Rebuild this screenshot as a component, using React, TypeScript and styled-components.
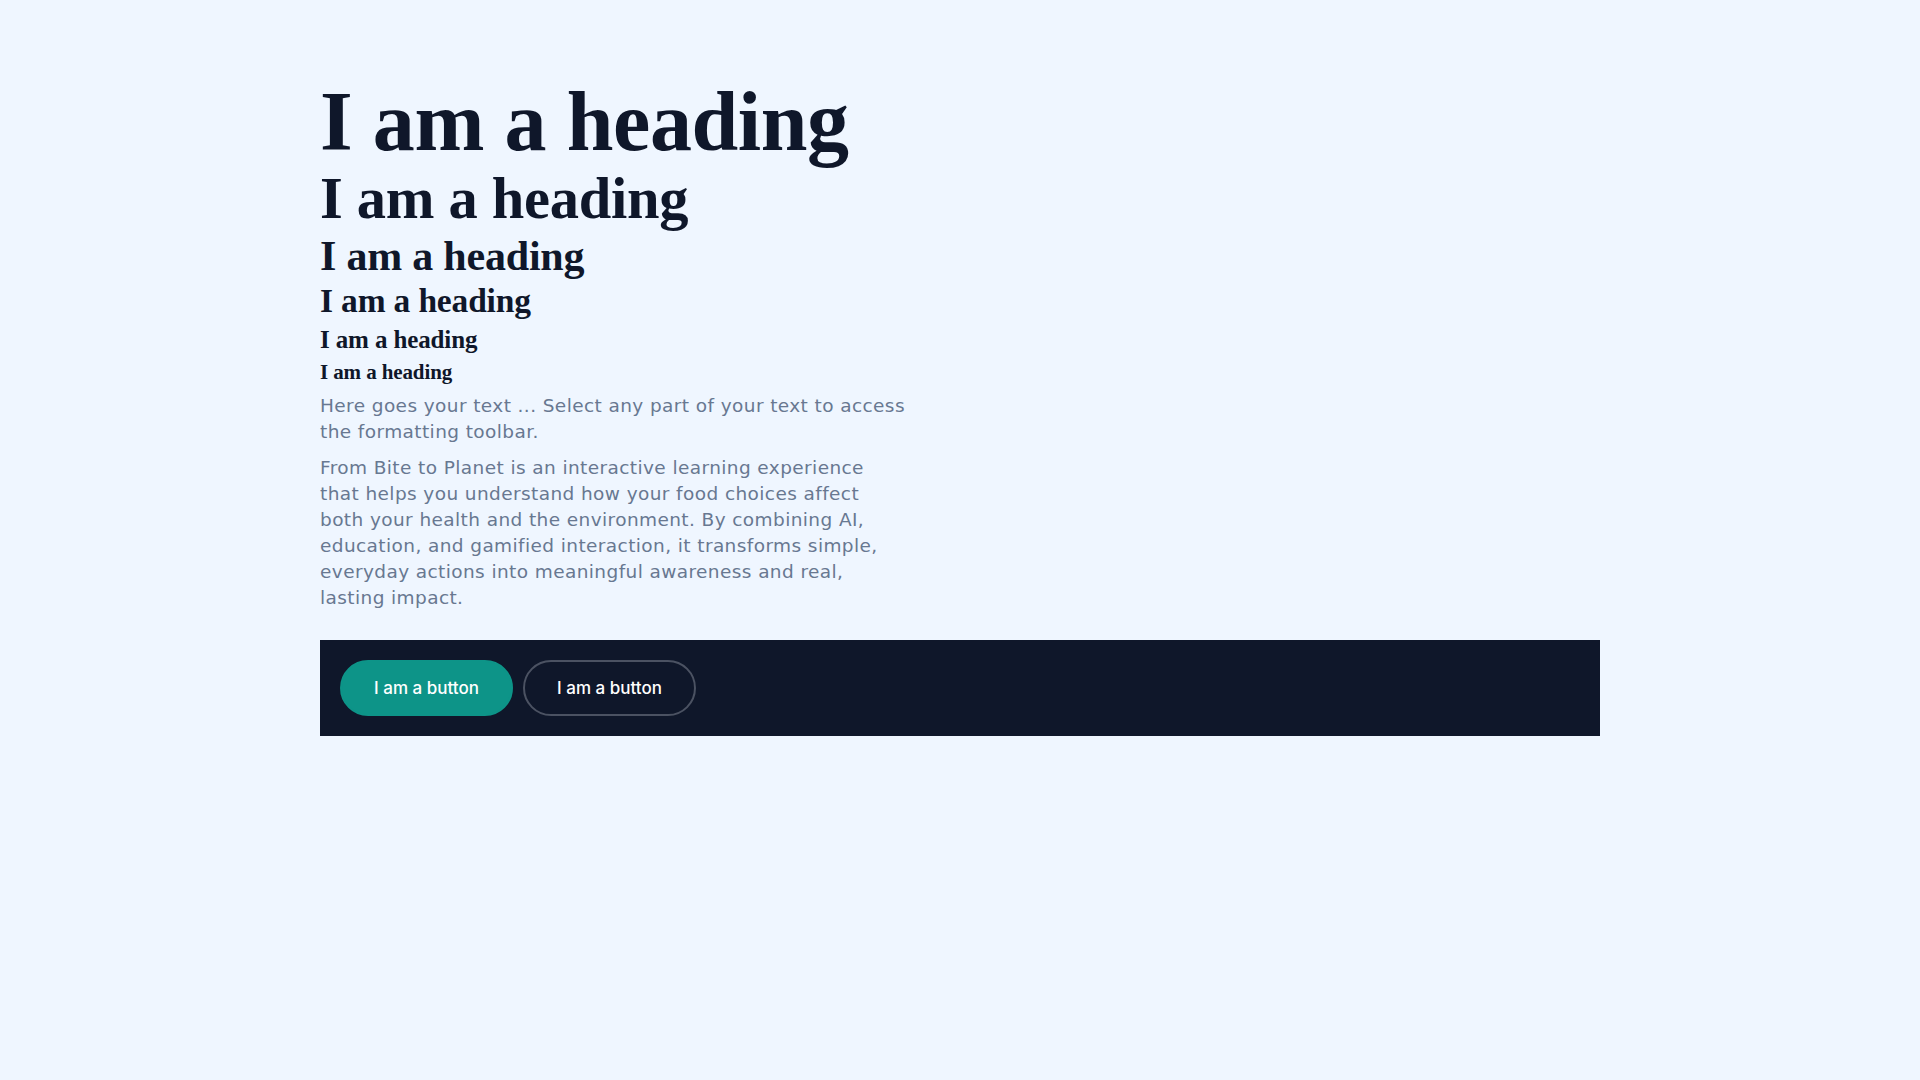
import React from "react";
import styled, { createGlobalStyle } from "styled-components";

const GlobalStyle = createGlobalStyle`
  html, body {
    margin: 0;
    padding: 0;
    background: #eff6ff;
  }
  body {
    min-height: 100vh;
  }
`;

const StyledPage = styled.main`
  width: 1280px;
  margin: 0 auto;
  padding-top: 78px;
  display: flex;
  flex-direction: column;
`;

const StyledHeading = styled.h1<{ $size: number; $lh: number }>`
  margin: 0;
  font-family: "Liberation Serif", "Times New Roman", serif;
  font-weight: 700;
  color: #0f172a;
  font-size: ${(p) => p.$size}px;
  line-height: ${(p) => p.$lh}px;
  letter-spacing: -0.005em;
`;

const StyledText = styled.p<{ $gap: number }>`
  margin: ${(p) => p.$gap}px 0 0;
  max-width: 640px;
  font-family: "DejaVu Sans", "Open Sans", sans-serif;
  font-size: 18.5px;
  letter-spacing: 0.4px;
  line-height: 26px;
  color: #687891;
`;

const StyledBar = styled.div`
  margin-top: 29px;
  height: 96px;
  box-sizing: border-box;
  padding: 20px;
  background: #0f172a;
  display: flex;
  align-items: center;
  gap: 10px;
`;

const StyledButton = styled.button<{ $variant: "solid" | "outline" }>`
  height: 56px;
  width: 173px;
  box-sizing: border-box;
  border-radius: 999px;
  border: 2px solid
    ${(p) => (p.$variant === "solid" ? "#0d9488" : "#4b5262")};
  background: ${(p) => (p.$variant === "solid" ? "#0d9488" : "transparent")};
  color: #ffffff;
  font-family: Inter, "Liberation Sans", sans-serif;
  font-size: 17px;
  font-weight: 500;
  cursor: pointer;
`;

const headings = [
  { size: 84, lh: 88 },
  { size: 58.5, lh: 65 },
  { size: 42, lh: 50 },
  { size: 33.5, lh: 40 },
  { size: 25, lh: 38 },
  { size: 21, lh: 27 },
];

const App = () => {
  return (
    <>
      <GlobalStyle />
      <StyledPage>
        {headings.map((h, i) => (
          <StyledHeading
            key={i}
            as={`h${i + 1}` as "h1"}
            $size={h.size}
            $lh={h.lh}
          >
            I am a heading
          </StyledHeading>
        ))}
        <StyledText $gap={7}>
          Here goes your text ... Select any part of your text to access
          <br />
          the formatting toolbar.
        </StyledText>
        <StyledText $gap={10}>
          From Bite to Planet is an interactive learning experience
          <br />
          that helps you understand how your food choices affect
          <br />
          both your health and the environment. By combining AI,
          <br />
          education, and gamified interaction, it transforms simple,
          <br />
          everyday actions into meaningful awareness and real,
          <br />
          lasting impact.
        </StyledText>
        <StyledBar>
          <StyledButton $variant="solid">I am a button</StyledButton>
          <StyledButton $variant="outline">I am a button</StyledButton>
        </StyledBar>
      </StyledPage>
    </>
  );
};

export default App;
